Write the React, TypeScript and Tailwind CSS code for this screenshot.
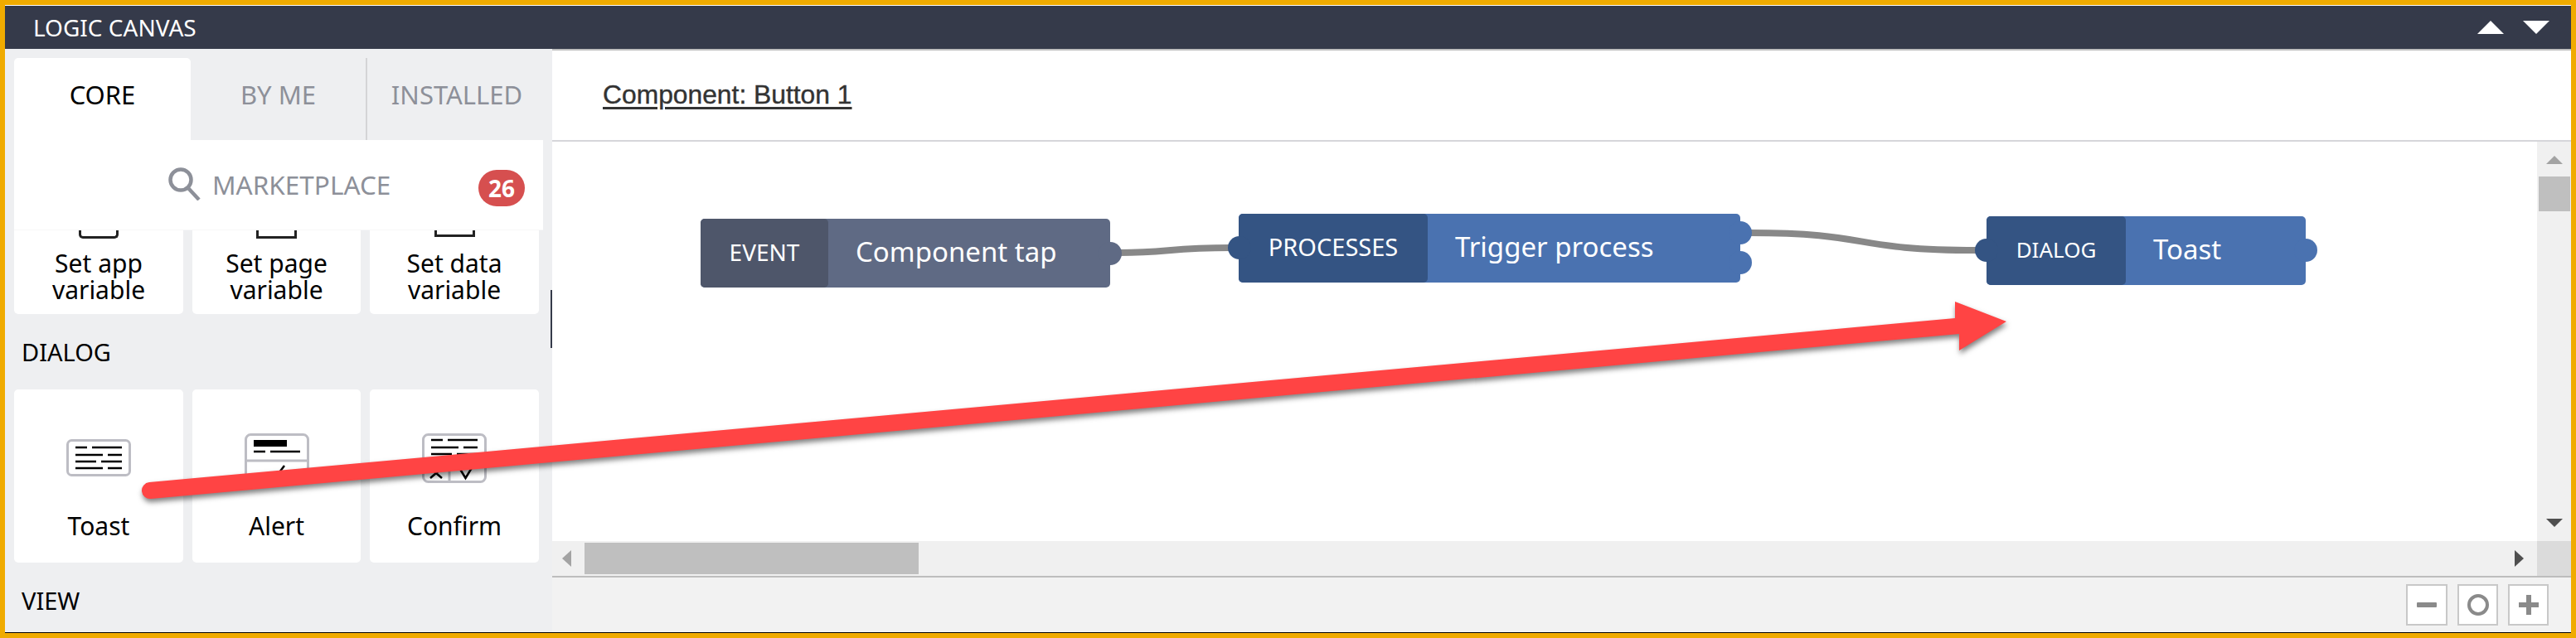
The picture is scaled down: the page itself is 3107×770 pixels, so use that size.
const FONT = "font-['Noto_Sans','Open_Sans',sans-serif]";

function Card({ label, icon }: { label: React.ReactNode; icon?: React.ReactNode }) {
  return (
    <div className="h-[209px] bg-white rounded-[5px] flex flex-col items-center">
      <div className="h-[149px] pt-[53px]">{icon}</div>
      <div className="text-[30px] leading-[32px] text-black">{label}</div>
    </div>
  );
}

function ToastIcon() {
  return (
    <svg width="78" height="45" viewBox="0 0 78 45" fill="none" className="mt-[7px]">
      <rect x="1.5" y="1.5" width="75" height="42" rx="5" fill="#fff" stroke="#bdbdc4" strokeWidth="3" />
      <path
        d="M11 10h14M31 10h36M11 19h33M50 19h17M11 27h25M42 27h25M11 35h33M50 35h17"
        stroke="#000"
        strokeWidth="2.5"
      />
    </svg>
  );
}

function AlertIcon() {
  return (
    <svg width="78" height="60" viewBox="0 0 78 60" fill="none">
      <rect x="1.5" y="1.5" width="75" height="57" rx="6" fill="#fff" stroke="#bdbdc4" strokeWidth="3" />
      <path d="M1.5 33h75" stroke="#bdbdc4" strokeWidth="3" />
      <rect x="11" y="8" width="40" height="8" fill="#000" />
      <path d="M11 22h14M31 22h36" stroke="#000" strokeWidth="2.5" />
      <path d="M30 49l6 6 12-16" stroke="#000" strokeWidth="2.5" />
    </svg>
  );
}

function ConfirmIcon() {
  return (
    <svg width="78" height="60" viewBox="0 0 78 60" fill="none">
      <rect x="1.5" y="1.5" width="75" height="57" rx="6" fill="#fff" stroke="#bdbdc4" strokeWidth="3" />
      <path d="M11 8h14M31 8h36M11 17h33M50 17h17M11 25h25M42 25h25" stroke="#000" strokeWidth="2.5" />
      <path d="M33 36v23" stroke="#bdbdc4" strokeWidth="3" />
      <path d="M10 42l14 12M24 42L10 54M44 40l8.5 14 8.5-14" stroke="#000" strokeWidth="2.5" />
    </svg>
  );
}

function Node({
  tag,
  title,
  className,
  dark,
  light,
  tagWidth,
  titleGap,
  tagSize,
  ports,
}: {
  tag: string;
  title: string;
  className: string;
  dark: string;
  light: string;
  tagWidth: string;
  titleGap: string;
  tagSize: string;
  ports: React.ReactNode;
}) {
  return (
    <div className={`absolute h-[83px] flex rounded-[5px] text-white ${light} ${className}`}>
      <div className={`${tagWidth} ${dark} ${tagSize} rounded-[5px] flex items-center justify-center pb-[3px]`}>{tag}</div>
      <div className={`${titleGap} text-[33px] flex items-center pb-[4px]`}>{title}</div>
      {ports}
    </div>
  );
}

function Port({ className }: { className: string }) {
  return <div className={`absolute w-[28px] h-[28px] rounded-full ${className}`} />;
}

export default function App() {
  return (
    <div className={`relative w-[3107px] h-[770px] overflow-hidden bg-[#f0ab00] pt-[6px] px-[6px] pb-[6px] ${FONT}`}>
      <div className="h-full flex flex-col bg-white border-t border-white border-b border-b-black">
        {/* Title bar */}
        <div className="h-[52px] shrink-0 bg-[#353a4a] flex items-center justify-between pl-[34px] pr-[26px]">
          <span className="text-white text-[28px] leading-none">LOGIC CANVAS</span>
          <div className="flex items-center gap-[23px]">
            <svg width="32" height="16" viewBox="0 0 32 16"><path d="M0 16L16 0l16 16z" fill="#fff" /></svg>
            <svg width="32" height="16" viewBox="0 0 32 16"><path d="M0 0h32L16 16z" fill="#fff" /></svg>
          </div>
        </div>

        <div className="flex-1 min-h-0 flex">
          {/* Component library */}
          <div className="w-[660px] shrink-0 bg-[#eeeff1] flex flex-col relative">
            <div className="flex h-[110px] pt-[11px] pl-[11px]">
              <div className="w-[213px] bg-white rounded-t-[5px] flex items-center justify-center text-[31px] text-black pb-[10px]">
                CORE
              </div>
              <div className="w-[213px] border-r-2 border-[#d4d4d6] flex items-center justify-center text-[31px] text-[#8d9099] pb-[10px]">
                BY ME
              </div>
              <div className="w-[222px] flex items-center justify-center text-[31px] text-[#8d9099] pb-[10px] pr-[6px]">
                INSTALLED
              </div>
            </div>
            <div className="ml-[11px] w-[638px] h-[109px] shrink-0 bg-white border-b border-[#f7f7f8] flex items-center pl-[186px]">
              <svg width="40" height="40" viewBox="0 0 40 40" fill="none" className="mt-[-2px]">
                <circle cx="15" cy="15" r="12.5" stroke="#8d9099" strokeWidth="4.5" />
                <path d="M24 25l13 14" stroke="#8d9099" strokeWidth="4.5" />
              </svg>
              <span className="ml-[13px] text-[31.5px] text-[#8d9099] mt-[-1px]">MARKETPLACE</span>
              <span className="ml-auto mr-[22px] mt-[7px] w-[56px] h-[44px] rounded-full bg-[#d64f4f] text-white text-[28px] font-bold flex items-center justify-center">
                26
              </span>
            </div>
            <div className="grid grid-cols-[204px_203px_204px] gap-x-[11px] pl-[11px] h-[101px]">
              <div className="h-[101px] bg-white rounded-b-[5px] flex flex-col items-center text-[30px] text-black">
                <div className="w-[48px] h-[10px] border-x-[3px] border-b-[3px] border-[#222] rounded-b-[5px]" />
                <div className="mt-[14px] leading-[32px] text-center">Set app<br />variable</div>
              </div>
              <div className="h-[101px] bg-white rounded-b-[5px] flex flex-col items-center text-[30px] text-black">
                <div className="w-[49px] h-[10px] border-x-[3px] border-b-[3px] border-[#222]" />
                <div className="mt-[14px] leading-[32px] text-center">Set page<br />variable</div>
              </div>
              <div className="h-[101px] bg-white rounded-b-[5px] flex flex-col items-center text-[30px] text-black">
                <div className="w-[49px] h-[8px] border-x-[3px] border-b-[3px] border-[#222]" />
                <div className="mt-[16px] leading-[32px] text-center">Set data<br />variable</div>
              </div>
            </div>
            <div className="pl-[20px] h-[91px] flex items-center text-[29px] text-black">DIALOG</div>
            <div className="grid grid-cols-[204px_203px_204px] gap-x-[11px] pl-[11px]">
              <Card label="Toast" icon={<ToastIcon />} />
              <Card label="Alert" icon={<AlertIcon />} />
              <Card label="Confirm" icon={<ConfirmIcon />} />
            </div>
            <div className="pl-[20px] flex-1 flex items-center text-[29px] text-black pt-[7px]">VIEW</div>
            <div className="absolute right-0 top-[291px] h-[70px] w-[2px] bg-[#353a4a]" />
          </div>

          {/* Canvas */}
          <div className="flex-1 min-w-0 flex flex-col">
            <div className="h-[112px] shrink-0 border-t-2 border-t-[#bfbfbf] border-b-2 border-b-[#d6d6da] flex items-center pl-[61px]">
              <span className="font-['Liberation_Sans',sans-serif] text-[31.8px] underline decoration-[3px] underline-offset-[4px] text-[#333] [-webkit-text-stroke:0.4px_#333]">
                Component: Button 1
              </span>
            </div>
            <div className="flex-1 min-h-0 flex">
              <div className="flex-1 min-w-0 flex flex-col">
                <div className="relative flex-1 min-h-0 bg-white" />
                <div className="h-[42px] shrink-0 bg-[#f0f0f0] flex items-center pl-[12px]">
                  <svg width="11" height="20" viewBox="0 0 11 20"><path d="M11 0v20L0 10z" fill="#a3a3a3" /></svg>
                  <div className="ml-[16px] w-[403px] h-[38px] bg-[#bfbfbf]" />
                  <svg width="11" height="20" viewBox="0 0 11 20" className="ml-[1925px]"><path d="M0 0v20l11-10z" fill="#4f4f4f" /></svg>
                </div>
              </div>
              <div className="w-[41px] shrink-0 flex flex-col bg-[#f0f0f0]">
                <div className="flex-1 flex flex-col items-center pt-[17px]">
                  <svg width="20" height="10" viewBox="0 0 20 10"><path d="M0 10L10 0l10 10z" fill="#a3a3a3" /></svg>
                  <div className="mt-[15px] w-[38px] h-[42px] bg-[#bfbfbf]" />
                  <svg width="20" height="10" viewBox="0 0 20 10" className="mt-auto mb-[17px]"><path d="M0 0h20L10 10z" fill="#4f4f4f" /></svg>
                </div>
                <div className="h-[42px] bg-[#dbdbdb]" />
              </div>
            </div>
            <div className="h-[68px] shrink-0 border-t-2 border-[#bdbdbd] bg-[#f2f2f2] flex items-center justify-end gap-[12px] pr-[27px]">
              <button className="w-[50px] h-[50px] border-2 border-[#c8c8c8] bg-white flex items-center justify-center">
                <span className="w-[24px] h-[6px] bg-[#8a8a8a] rounded-[1px]" />
              </button>
              <button className="w-[49px] h-[50px] border-2 border-[#c8c8c8] bg-white flex items-center justify-center">
                <span className="w-[26px] h-[26px] border-[4px] border-[#8a8a8a] rounded-full" />
              </button>
              <button className="w-[49px] h-[50px] border-2 border-[#c8c8c8] bg-white flex items-center justify-center">
                <svg width="24" height="24" viewBox="0 0 24 24"><path d="M12 0v24M0 12h24" stroke="#8a8a8a" strokeWidth="6" /></svg>
              </button>
            </div>
          </div>
        </div>
      </div>

      {/* Wires */}
      <svg className="absolute left-0 top-0 pointer-events-none" width="3107" height="770" fill="none">
        <path d="M1350 305c60 0 60-6 135-6" stroke="#888" strokeWidth="8" />
        <path d="M2110 281c150 0 120 21 275 21" stroke="#888" strokeWidth="8" />
      </svg>

      <Node
        tag="EVENT"
        title="Component tap"
        className="left-[845px] top-[264px] w-[494px]"
        dark="bg-[#4e566a]"
        light="bg-[#5f6a84]"
        tagWidth="w-[154px]"
        titleGap="ml-[33px]"
        tagSize="text-[28px]"
        ports={<Port className="bg-[#5f6a84] right-[-14px] top-[28px]" />}
      />
      <Node
        tag="PROCESSES"
        title="Trigger process"
        className="left-[1494px] top-[258px] w-[605px]"
        dark="bg-[#345483]"
        light="bg-[#4a72b0]"
        tagWidth="w-[228px]"
        titleGap="ml-[33px]"
        tagSize="text-[29px]"
        ports={
          <>
            <Port className="bg-[#345483] left-[-13px] top-[27px]" />
            <Port className="bg-[#4a72b0] right-[-14px] top-[9px]" />
            <Port className="bg-[#4a72b0] right-[-14px] top-[45px]" />
          </>
        }
      />
      <Node
        tag="DIALOG"
        title="Toast"
        className="left-[2396px] top-[261px] w-[385px]"
        dark="bg-[#345483]"
        light="bg-[#4a72b0]"
        tagWidth="w-[168px]"
        titleGap="ml-[33px]"
        tagSize="text-[26px]"
        ports={
          <>
            <Port className="bg-[#345483] left-[-14px] top-[27px]" />
            <Port className="bg-[#4a72b0] right-[-14px] top-[27px]" />
          </>
        }
      />

      {/* Annotation arrow */}
      <svg className="absolute left-0 top-0 pointer-events-none drop-shadow-[1px_4px_3px_rgba(0,0,0,0.5)]" width="3107" height="770">
        <path
          d="M180 582L2358 384L2358 364L2420 388L2363 423L2363 403L182 602A10 10 0 0 1 180 582Z"
          fill="#ff4444"
        />
      </svg>
    </div>
  );
}
